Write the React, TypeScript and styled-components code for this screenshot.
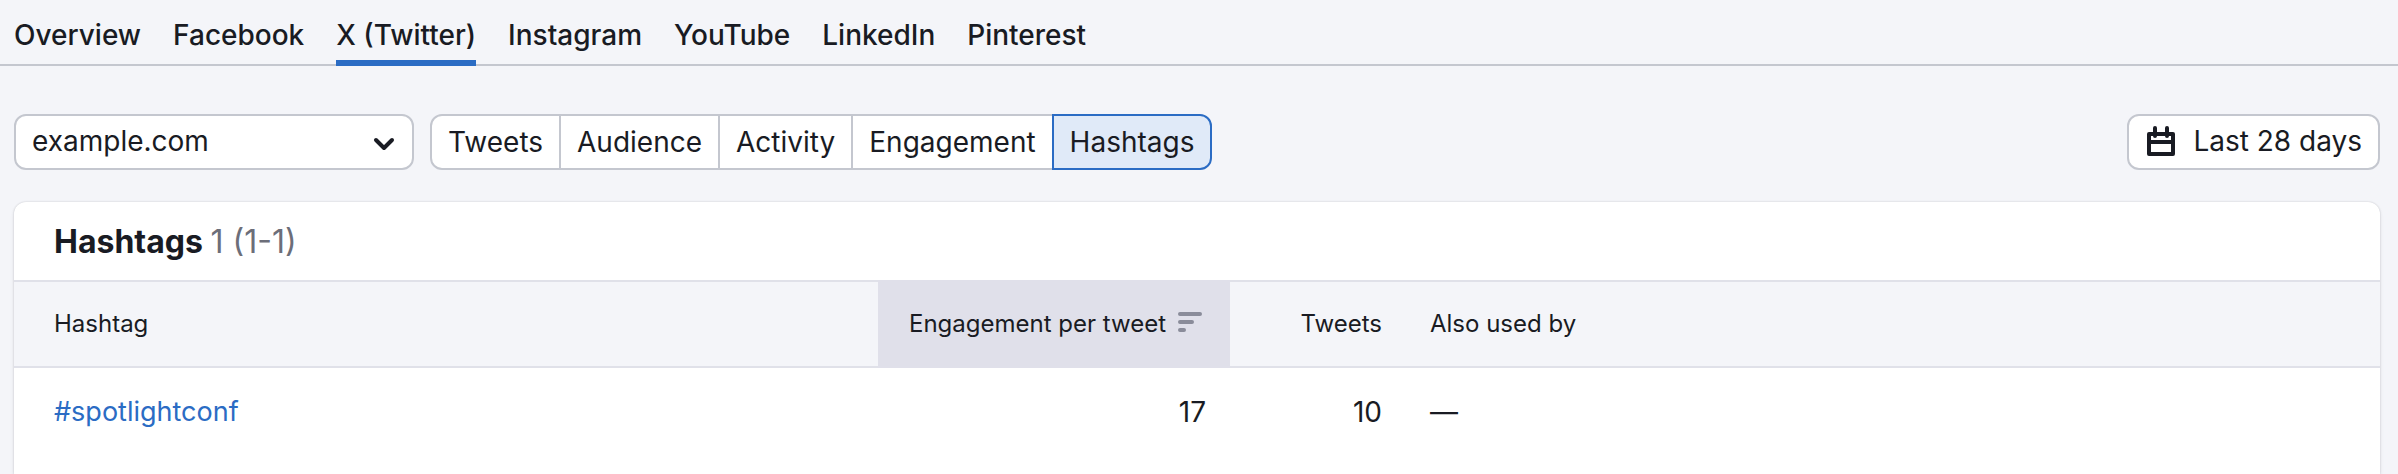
import React, { useState } from "react";
import styled, { createGlobalStyle } from "styled-components";

const c = {
  page: "#f4f5f9",
  text: "#191b23",
  muted: "#6c6e79",
  control: "#c4c7cf",
  line: "#e0e1e9",
  sorted: "#e0e0ea",
  blue: "#2b6cc4",
  blueSoft: "#e0eaf8",
  sortIcon: "#8a8c9a",
};

const GlobalStyle = createGlobalStyle`
  *, *::before, *::after { box-sizing: border-box; }
  body {
    margin: 0;
    background: ${c.page};
    color: ${c.text};
    font-family: Inter, "Liberation Sans", sans-serif;
    font-size: 28px;
    line-height: 40px;
  }
  #root { display: flex; flex-direction: column; min-height: 100vh; }
  button, select { font: inherit; color: inherit; margin: 0; }
`;

const TabLine = styled.nav`
  display: flex;
  gap: 32px;
  padding: 0 14px;
  border-bottom: 2px solid ${c.control};
`;

const Tab = styled.a<{ $active: boolean }>`
  padding: 15px 0 5px;
  margin-bottom: -2px;
  border-bottom: 6px solid ${(p) => (p.$active ? c.blue : "transparent")};
  color: ${c.text};
  font-weight: 500;
  text-decoration: none;
  white-space: nowrap;
`;

const Toolbar = styled.div`
  display: flex;
  align-items: center;
  gap: 16px;
  padding: 48px 18px 32px 14px;
`;

const SelectBox = styled.label`
  position: relative;
  width: 400px;
  svg {
    position: absolute;
    right: 18px;
    top: 16px;
    pointer-events: none;
  }
`;

const Select = styled.select`
  display: block;
  width: 100%;
  height: 56px;
  padding: 0 56px 2px 16px;
  appearance: none;
  background: #fff;
  border: 2px solid ${c.control};
  border-radius: 12px;
`;

const Pills = styled.div`
  display: flex;
`;

const Pill = styled.button<{ $active: boolean }>`
  height: 56px;
  padding: 0 16px;
  margin-left: -2px;
  background: ${(p) => (p.$active ? c.blueSoft : "#fff")};
  border: 2px solid ${(p) => (p.$active ? c.blue : c.control)};
  z-index: ${(p) => (p.$active ? 1 : 0)};
  &:first-child { margin-left: 0; border-radius: 12px 0 0 12px; }
  &:last-child { border-radius: 0 12px 12px 0; }
`;

const DateButton = styled.button`
  display: flex;
  align-items: center;
  gap: 16px;
  height: 56px;
  margin-left: auto;
  padding: 0 16px 2px;
  background: #fff;
  border: 2px solid ${c.control};
  border-radius: 12px;
`;

const Card = styled.section`
  flex: 1;
  margin: 0 18px 0 14px;
  background: #fff;
  border-radius: 12px 12px 0 0;
  box-shadow: 0 0 2px rgba(25, 27, 35, 0.2), 0 2px 4px rgba(25, 27, 35, 0.08);
`;

const CardTitle = styled.h2`
  margin: 0;
  padding: 20px 40px 18px;
  font-size: 32px;
  line-height: 40px;
  font-weight: 700;
  span { color: ${c.muted}; font-weight: 400; }
`;

const Table = styled.table`
  width: 100%;
  table-layout: fixed;
  border-collapse: separate;
  border-spacing: 0;
`;

const Col = styled.col<{ $width?: string }>`
  width: ${(p) => p.$width ?? "auto"};
`;

const Th = styled.th<{ $right?: boolean; $sorted?: boolean }>`
  height: 88px;
  padding: 0 24px;
  background: ${(p) => (p.$sorted ? c.sorted : c.page)};
  border: solid ${(p) => (p.$sorted ? c.sorted : c.line)};
  border-width: 2px 0;
  font-size: 24px;
  font-weight: 400;
  text-align: ${(p) => (p.$right ? "right" : "left")};
  &:first-child { padding-left: 40px; }
`;

const SortButton = styled.button`
  display: inline-flex;
  align-items: center;
  gap: 8px;
  padding: 0;
  background: none;
  border: 0;
  white-space: nowrap;
`;

const Td = styled.td<{ $right?: boolean }>`
  padding: 23px 24px;
  text-align: ${(p) => (p.$right ? "right" : "left")};
  &:first-child { padding-left: 40px; }
`;

const Link = styled.a`
  color: ${c.blue};
  font-size: 27px;
  text-decoration: none;
`;

const Chevron = () => (
  <svg width="24" height="24" viewBox="0 0 24 24" fill="none" stroke={c.text} strokeWidth="4" strokeLinecap="round" strokeLinejoin="round" aria-hidden="true">
    <path d="M4 10l8 8 8-8" />
  </svg>
);

const Calendar = () => (
  <svg width="32" height="32" viewBox="0 0 32 32" aria-hidden="true">
    <path
      fill={c.text}
      fillRule="evenodd"
      d="M10 1a2 2 0 0 1 2 2v4h8V3a2 2 0 0 1 4 0v4h4a2 2 0 0 1 2 2v20a2 2 0 0 1-2 2H4a2 2 0 0 1-2-2V9a2 2 0 0 1 2-2h4V3a2 2 0 0 1 2-2zM6 11v4h20v-4h-2a2 2 0 0 1-4 0h-8a2 2 0 0 1-4 0zM6 19v8h20v-8z"
    />
  </svg>
);

const SortIcon = () => (
  <svg width="32" height="32" viewBox="0 0 32 32" fill="none" stroke={c.sortIcon} strokeWidth="4" strokeLinecap="round" aria-hidden="true">
    <path d="M6 6h20M6 14h12M6 22h4" />
  </svg>
);

const networks = ["Overview", "Facebook", "X (Twitter)", "Instagram", "YouTube", "LinkedIn", "Pinterest"];
const views = ["Tweets", "Audience", "Activity", "Engagement", "Hashtags"];

export default function App() {
  const [network, setNetwork] = useState("X (Twitter)");
  const [view, setView] = useState("Hashtags");
  return (
    <>
      <GlobalStyle />
      <TabLine aria-label="Social networks">
        {networks.map((n) => (
          <Tab key={n} href="#" $active={n === network} aria-current={n === network ? "page" : undefined} onClick={() => setNetwork(n)}>
            {n}
          </Tab>
        ))}
      </TabLine>
      <Toolbar>
        <SelectBox>
          <Select aria-label="Profile">
            <option>example.com</option>
          </Select>
          <Chevron />
        </SelectBox>
        <Pills role="group" aria-label="Report">
          {views.map((v) => (
            <Pill key={v} type="button" $active={v === view} aria-pressed={v === view} onClick={() => setView(v)}>
              {v}
            </Pill>
          ))}
        </Pills>
        <DateButton type="button">
          <Calendar />
          Last 28 days
        </DateButton>
      </Toolbar>
      <Card>
        <CardTitle>
          Hashtags <span>1 (1-1)</span>
        </CardTitle>
        <Table>
          <colgroup>
            <Col />
            <Col $width="352px" />
            <Col $width="176px" />
            <Col $width="974px" />
          </colgroup>
          <thead>
            <tr>
              <Th scope="col">Hashtag</Th>
              <Th scope="col" $right $sorted aria-sort="descending">
                <SortButton type="button">
                  Engagement per tweet
                  <SortIcon />
                </SortButton>
              </Th>
              <Th scope="col" $right>Tweets</Th>
              <Th scope="col">Also used by</Th>
            </tr>
          </thead>
          <tbody>
            <tr>
              <Td><Link href="#">#spotlightconf</Link></Td>
              <Td $right>17</Td>
              <Td $right>10</Td>
              <Td>—</Td>
            </tr>
          </tbody>
        </Table>
      </Card>
    </>
  );
}
